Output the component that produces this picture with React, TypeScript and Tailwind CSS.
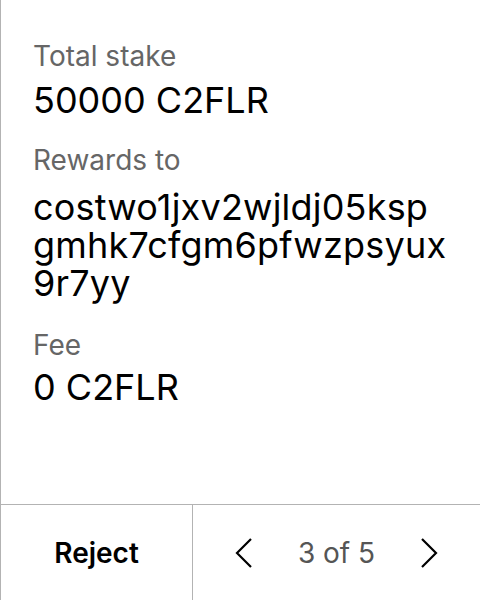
import React from "react";

export default function App() {
  return (
    <div className="w-[480px] h-[600px] bg-white border-l border-[#b3b3b3] flex flex-col" style={{ fontFamily: "Inter, 'Noto Sans', sans-serif" }}>
      <div className="flex-1 pl-8 pr-8 pt-[39px] flex flex-col">
        <div className="text-[28px] leading-[34px] text-[#666666]">Total stake</div>
        <div className="text-[36px] leading-[38px] text-black mt-[8px]">50000 C2FLR</div>
        <div className="text-[28px] leading-[34px] text-[#666666] mt-[24px]">Rewards to</div>
        <div className="text-[36px] leading-[38px] text-black mt-[11px] break-all tracking-[0.2px]">costwo1jxv2wjldj05kspgmhk7cfgm6pfwzpsyux9r7yy</div>
        <div className="text-[28px] leading-[34px] text-[#666666] mt-[26px]">Fee</div>
        <div className="text-[36px] leading-[38px] text-black mt-[6px]">0 C2FLR</div>
      </div>
      <div className="h-[96px] border-t border-[#b3b3b3] flex">
        <div className="w-[192px] border-r border-[#b3b3b3] flex items-center justify-center text-[28px] font-semibold text-black">Reject</div>
        <div className="flex-1 flex items-center justify-between px-[42px]">
          <svg width="18" height="32" viewBox="0 0 18 32" fill="none" stroke="black" strokeWidth="2.2">
            <path d="M16 2 L2 16 L16 30" />
          </svg>
          <span className="text-[28px] text-[#555555]">3 of 5</span>
          <svg width="18" height="32" viewBox="0 0 18 32" fill="none" stroke="black" strokeWidth="2.2">
            <path d="M2 2 L16 16 L2 30" />
          </svg>
        </div>
      </div>
    </div>
  );
}
